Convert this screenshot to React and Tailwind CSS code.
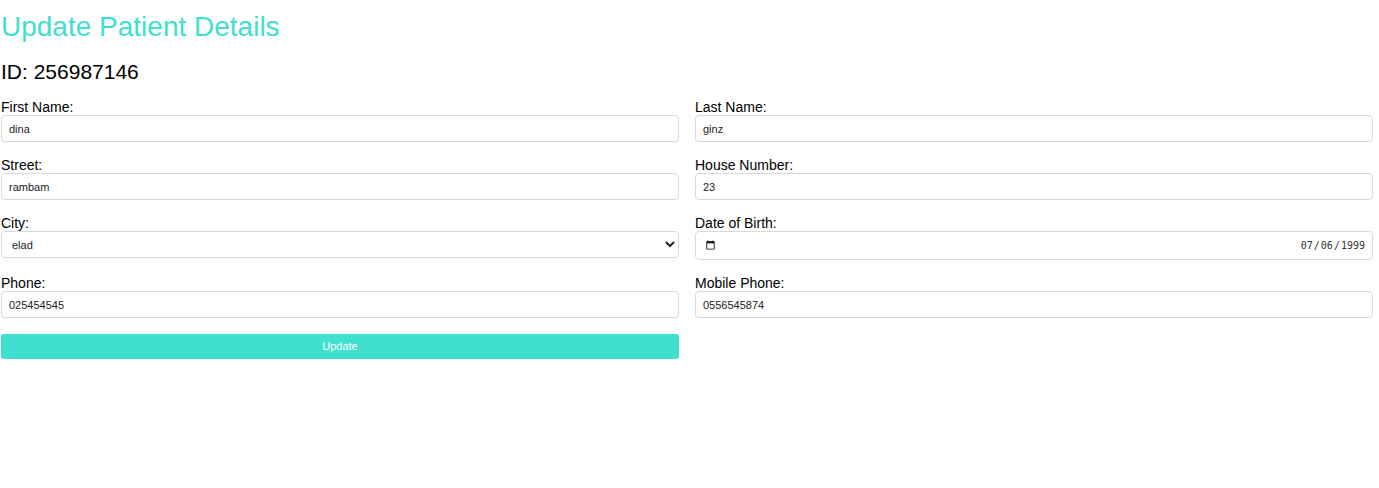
import { useState } from 'react';

const fieldCls =
  'block w-full h-[27px] border border-[#d9d9d9] rounded-[4px] px-[7px] text-[11px] text-[#222] bg-white outline-none';

const Field = ({ label, children }) => (
  <div>
    <label className="block text-[14px] leading-4 text-black">{label}</label>
    {children}
  </div>
);

const App = () => {
  const [form, setForm] = useState({
    firstName: 'dina',
    lastName: 'ginz',
    street: 'rambam',
    houseNumber: '23',
    city: 'elad',
    birthDate: '1999-07-06',
    phone: '025454545',
    mobile: '0556545874',
  });

  const onChange = (e) => setForm({ ...form, [e.target.name]: e.target.value });

  return (
    <div className="min-h-screen bg-white pl-px pr-[6px] pt-[11px] font-['Liberation_Sans',Arial,sans-serif]">
      <h1 className="text-[28px] leading-8 text-[#40e0d0] mb-[17px]">Update Patient Details</h1>
      <h2 className="text-[21px] leading-6 text-black mb-[15px]">ID: 256987146</h2>

      <form className="grid grid-cols-2 gap-x-4 gap-y-[15px]" onSubmit={(e) => e.preventDefault()}>
        <Field label="First Name:">
          <input name="firstName" value={form.firstName} onChange={onChange} className={fieldCls} />
        </Field>
        <Field label="Last Name:">
          <input name="lastName" value={form.lastName} onChange={onChange} className={fieldCls} />
        </Field>

        <Field label="Street:">
          <input name="street" value={form.street} onChange={onChange} className={fieldCls} />
        </Field>
        <Field label="House Number:">
          <input name="houseNumber" value={form.houseNumber} onChange={onChange} className={fieldCls} />
        </Field>

        <Field label="City:">
          <select
            name="city"
            value={form.city}
            onChange={onChange}
            className="block w-full h-[27px] border border-[#d9d9d9] rounded-[4px] pl-[6px] pr-[4px] text-[11px] text-[#222] bg-white outline-none"
          >
            <option value="elad">elad</option>
            <option value="bnei brak">bnei brak</option>
            <option value="jerusalem">jerusalem</option>
          </select>
        </Field>
        <Field label="Date of Birth:">
          {/* picker icon on the left, date text pushed to the right */}
          <input
            type="date"
            name="birthDate"
            value={form.birthDate}
            onChange={onChange}
            className="block w-full h-[29px] border border-[#d9d9d9] rounded-[4px] pl-[9px] pr-[6px] text-[10px] text-[#333] bg-white outline-none font-['DejaVu_Sans_Mono',monospace] [&::-webkit-calendar-picker-indicator]:order-[-1] [&::-webkit-calendar-picker-indicator]:ml-0 [&::-webkit-calendar-picker-indicator]:mr-auto [&::-webkit-calendar-picker-indicator]:w-[11px] [&::-webkit-calendar-picker-indicator]:h-[11px] [&::-webkit-calendar-picker-indicator]:p-0 [&::-webkit-datetime-edit]:flex-none [&::-webkit-datetime-edit]:justify-end"
          />
        </Field>

        <Field label="Phone:">
          <input name="phone" value={form.phone} onChange={onChange} className={fieldCls} />
        </Field>
        <Field label="Mobile Phone:">
          <input name="mobile" value={form.mobile} onChange={onChange} className={fieldCls} />
        </Field>

        <button
          type="submit"
          className="mt-px h-[25px] w-full rounded-[3px] bg-[#40e0d0] text-[11px] text-white"
        >
          Update
        </button>
      </form>
    </div>
  );
};

export default App;
